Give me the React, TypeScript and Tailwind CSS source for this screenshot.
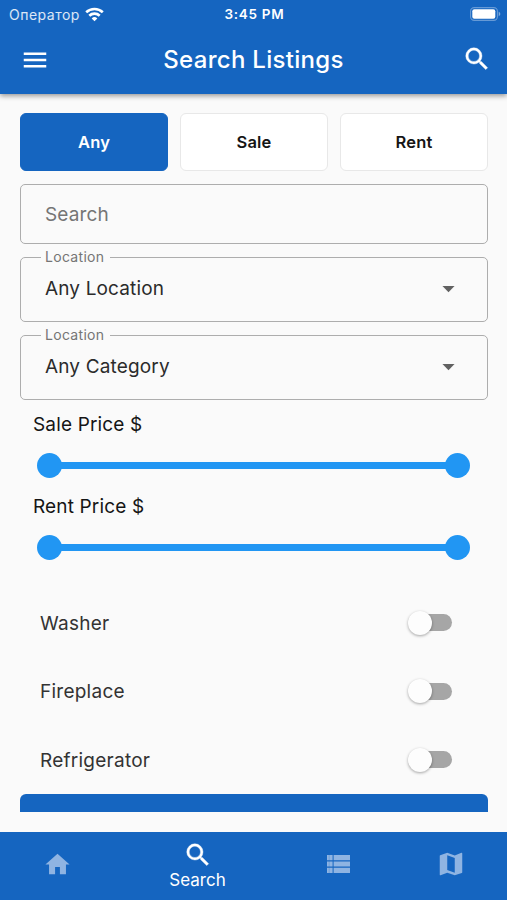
import React, { useState } from 'react';
import { MdArrowDropDown, MdHome, MdMenu } from 'react-icons/md';

type ListingType = 'Any' | 'Sale' | 'Rent';

const LISTING_TYPES: ListingType[] = ['Any', 'Sale', 'Rent'];
const AMENITIES = ['Washer', 'Fireplace', 'Refrigerator'];

const WifiIcon = () => (
    <svg width="19" height="15" viewBox="0 0 19 15" fill="none" stroke="white" strokeWidth="2.6">
        <path d="M1.2 5.3a12 12 0 0 1 16.6 0" />
        <path d="M4.3 8.7a7.5 7.5 0 0 1 10.4 0" />
        <path d="M9.5 14.2L6.7 11.4a4 4 0 0 1 5.6 0z" fill="white" stroke="none" />
    </svg>
);

const BatteryIcon = () => (
    <svg width="31" height="14" viewBox="0 0 31 14" fill="none">
        <rect x="0.6" y="0.6" width="26.8" height="12.8" rx="3.6" stroke="white" strokeOpacity="0.35" strokeWidth="1.1" />
        <rect x="2.3" y="2.3" width="23" height="9.4" rx="2" fill="white" />
        <path d="M28.7 4.8v4.4c1-.4 1.6-1.2 1.6-2.2s-.6-1.8-1.6-2.2z" fill="white" fillOpacity="0.45" />
    </svg>
);

const SearchIcon = ({ className }: { className?: string }) => (
    <svg width="30" height="30" viewBox="0 0 24 24" fill="currentColor" stroke="currentColor" strokeWidth="0.3" className={className}>
        <path d="M15.5 14h-.79l-.28-.27A6.471 6.471 0 0 0 16 9.500 6.500 6.500 0 1 0 9.500 16c1.610 0 3.090-.59 4.230-1.570l.27.28v.79l5 4.990L20.490 19l-4.990-5zm-6 0C7.010 14 5 11.990 5 9.500S7.010 5 9.500 5 14 7.010 14 9.500 11.990 14 9.500 14z" />
    </svg>
);

const ListIcon = () => (
    <svg width="23" height="18" viewBox="0 0 23 18" fill="currentColor">
        <path d="M0 0h5.6v5.2H0zM6.6 0H23v5.2H6.6zM0 6.4h5.6v5.2H0zM6.6 6.4H23v5.2H6.6zM0 12.8h5.6V18H0zM6.6 12.8H23V18H6.6z" />
        <path d="M2.2 0v18" stroke="#1565c0" strokeOpacity="0.35" strokeWidth="0.7" />
    </svg>
);

const MapIcon = () => (
    <svg width="30" height="30" viewBox="0 0 24 24" fill="currentColor">
        <path d="M20.5 3l-.16.03L15 5.1 9 3 3.36 4.9c-.21.07-.36.25-.36.48V20.5c0 .28.22.5.5.5l.16-.03L9 18.9l6 2.1 5.64-1.9c.21-.07.36-.25.36-.48V3.5c0-.28-.22-.5-.5-.5zM15 19l-6-2.11V5l6 2.11V19z" />
    </svg>
);

const StatusBar = () => (
    <div className="grid h-[28px] grid-cols-3 items-center pl-[9px] pr-[6px] text-white">
        <div className="flex items-center gap-[5px]">
            <span className="text-[14px] tracking-[0.5px] text-white/85">Оператор</span>
            <WifiIcon />
        </div>
        <span className="pr-px text-center text-[13.5px] font-semibold tracking-[0.7px]">3:45 PM</span>
        <div className="-mt-px flex justify-end">
            <BatteryIcon />
        </div>
    </div>
);

const SelectField = ({ label, value }: { label: string; value: string }) => (
    <fieldset className="h-[74px] rounded-[5px] border border-[#adadad] px-[20px]">
        <legend className="h-[18px] pl-[4px] pr-[6px] text-[14px] leading-[18px] tracking-[0.3px] text-[#757575]">{label}</legend>
        <div className="flex h-[44px] items-center justify-between px-[4px]">
            <span className="pt-[2px] text-[19px] tracking-[0.15px] text-[#2b2b2b]">{value}</span>
            <MdArrowDropDown size={29} className="text-[#616161]" />
        </div>
    </fieldset>
);

const PriceRange = ({ label }: { label: string }) => (
    <div className="h-[82px] pl-[13px]">
        <p className="h-[28px] text-[19px] leading-[28px] tracking-[0.15px] text-[#151515]">{label}</p>
        <div className="ml-[4px] mr-[18px] mt-[14px] flex h-[25px] items-center">
            <span className="h-[25px] w-[25px] rounded-full bg-[#2196f3]" />
            <span className="-mx-1 h-[7px] flex-1 bg-[#2196f3]" />
            <span className="h-[25px] w-[25px] rounded-full bg-[#2196f3]" />
        </div>
    </div>
);

interface SwitchRowProps {
    label: string;
    checked: boolean;
    onToggle: () => void;
}

const SwitchRow: React.FC<SwitchRowProps> = ({ label, checked, onToggle }) => (
    <div className="flex h-[68.5px] items-center justify-between pl-[20px] pr-[36px] pt-px">
        <span className="pt-[2px] text-[19px] tracking-[0.25px] text-[#333333]">{label}</span>
        <button
            role="switch"
            aria-checked={checked}
            aria-label={label}
            onClick={onToggle}
            className={`flex h-[17px] w-[41px] items-center rounded-full ${checked ? 'justify-end bg-[#90caf9]' : 'bg-[#a6a6a6]'}`}
        >
            <span className="-ml-[3px] h-[24px] w-[24px] shrink-0 rounded-full bg-[#fdfdfd] shadow-[0_1px_3px_rgba(0,0,0,0.35)]" />
        </button>
    </div>
);

export default function App() {
    const [listingType, setListingType] = useState<ListingType>('Any');
    const [query, setQuery] = useState('');
    const [selected, setSelected] = useState<string[]>([]);

    const toggleAmenity = (name: string) => {
        setSelected((prev) => (prev.includes(name) ? prev.filter((n) => n !== name) : [...prev, name]));
    };

    return (
        <div className="flex h-[900px] w-[507px] flex-col overflow-hidden bg-[#fafafa] font-['Inter',sans-serif]">
            <header className="z-10 h-[94px] shrink-0 bg-[#1565c0] text-white shadow-[0_2px_5px_rgba(0,0,0,0.4)]">
                <StatusBar />
                <div className="flex h-[64px] items-center justify-between pl-[20px] pr-[15px]">
                    <MdMenu size={30} />
                    <h1 className="pr-[5px] text-[24px] font-medium tracking-[0.3px]">Search Listings</h1>
                    <SearchIcon className="-mt-[2px]" />
                </div>
            </header>

            <main className="h-[718px] shrink-0 overflow-hidden pl-[20px] pr-[19px] pt-[19px]">
                <div className="grid h-[58px] grid-cols-3 gap-3">
                    {LISTING_TYPES.map((type) => (
                        <button
                            key={type}
                            onClick={() => setListingType(type)}
                            className={`rounded-[6px] border pt-px text-[16.5px] font-semibold tracking-[0.2px] ${
                                listingType === type
                                    ? 'border-[#1565c0] bg-[#1565c0] text-white'
                                    : 'border-[#e8e8e8] bg-white text-[#151515]'
                            }`}
                        >
                            {type}
                        </button>
                    ))}
                </div>

                <input
                    type="text"
                    value={query}
                    onChange={(e) => setQuery(e.target.value)}
                    placeholder="Search"
                    className="mt-[13px] block h-[60px] w-full rounded-[5px] border border-[#adadad] px-[24px] text-[19px] tracking-[0.15px] outline-none placeholder:text-[#757575]"
                />

                <div className="mt-[4px] flex flex-col gap-[4px]">
                    <SelectField label="Location" value="Any Location" />
                    <SelectField label="Location" value="Any Category" />
                </div>

                <div className="mt-[11px]">
                    <PriceRange label="Sale Price $" />
                    <PriceRange label="Rent Price $" />
                </div>

                <div className="mt-[13px]">
                    {AMENITIES.map((name) => (
                        <SwitchRow
                            key={name}
                            label={name}
                            checked={selected.includes(name)}
                            onToggle={() => toggleAmenity(name)}
                        />
                    ))}
                </div>

                <button aria-label="Search" className="block h-[58px] w-full rounded-[6px] bg-[#1565c0]" />
            </main>

            <nav className="mt-auto flex h-[68px] shrink-0 items-center bg-[#1565c0] text-[#8fb4e2]">
                <button aria-label="Home" className="flex h-full w-[114px] items-center justify-center pb-[4px]">
                    <MdHome size={29} />
                </button>
                <button className="flex h-full w-[167px] flex-col items-center pt-[8px] text-white">
                    <SearchIcon />
                    <span className="text-[17px] leading-[21px]">Search</span>
                </button>
                <button aria-label="Listings" className="flex h-full w-[114px] items-center justify-center pb-[4px]">
                    <ListIcon />
                </button>
                <button aria-label="Map" className="flex h-full w-[112px] items-center justify-center pb-[4px]">
                    <MapIcon />
                </button>
            </nav>
        </div>
    );
}
